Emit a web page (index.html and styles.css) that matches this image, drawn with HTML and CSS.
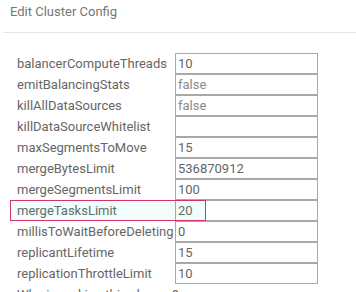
FILE: index.html
```html
<!DOCTYPE html>
<html>
<head>
<meta charset="utf-8">
<link rel="stylesheet" href="styles.css">
</head>
<body>
<div class="dialog">
  <div class="header">Edit Cluster Config</div>
  <div class="form">
    <div class="row"><label>balancerComputeThreads</label><input class="field" value="10"></div>
    <div class="row"><label>emitBalancingStats</label><input class="field light" value="false"></div>
    <div class="row"><label>killAllDataSources</label><input class="field light" value="false"></div>
    <div class="row"><label>killDataSourceWhitelist</label><input class="field" value=""></div>
    <div class="row"><label>maxSegmentsToMove</label><input class="field" value="15"></div>
    <div class="row"><label>mergeBytesLimit</label><input class="field" value="536870912"></div>
    <div class="row"><label>mergeSegmentsLimit</label><input class="field" value="100"></div>
    <div class="row highlighted"><label>mergeTasksLimit</label><input class="field" value="20"><span class="highlight"></span></div>
    <div class="row"><label>millisToWaitBeforeDeleting</label><input class="field" value="0"></div>
    <div class="row"><label>replicantLifetime</label><input class="field" value="15"></div>
    <div class="row"><label>replicationThrottleLimit</label><input class="field" value="10"></div>
    <div class="row"><label>Who is making this change?</label></div>
  </div>
</div>
</body>
</html>
```
FILE: styles.css
```css
html, body {
  margin: 0;
  padding: 0;
  background: #fff;
}
body {
  font-family: Roboto, "Liberation Sans", sans-serif;
  font-size: 13px;
  color: #666;
  overflow: hidden;
}
.dialog {
  width: 356px;
}
.header {
  margin-left: 3px;
  padding: 4px 0 0 7px;
  height: 28px;
  line-height: 15px;
  border-bottom: 1px solid #e6e6e6;
  color: #777;
}
.form {
  padding: 20px 0 0 17px;
}
.row {
  display: grid;
  grid-template-columns: 158px 143px;
  height: 21px;
  align-items: center;
  position: relative;
}
.row label {
  white-space: nowrap;
  line-height: 21px;
}
.field {
  box-sizing: border-box;
  height: 21px;
  width: 143px;
  margin: 0;
  border: 1px solid #a8a8a8;
  padding: 0 2px;
  font-family: Roboto, "Liberation Sans", sans-serif;
  font-size: 13px;
  color: #666;
  background: #fff;
  outline: none;
}
.field.light {
  color: #8a8a8a;
}
.highlight {
  position: absolute;
  left: -7px;
  top: 0;
  width: 196px;
  height: 21px;
  box-sizing: border-box;
  border: 1px solid #d8306a;
  background: rgba(40, 220, 190, 0.07);
  pointer-events: none;
}
```
